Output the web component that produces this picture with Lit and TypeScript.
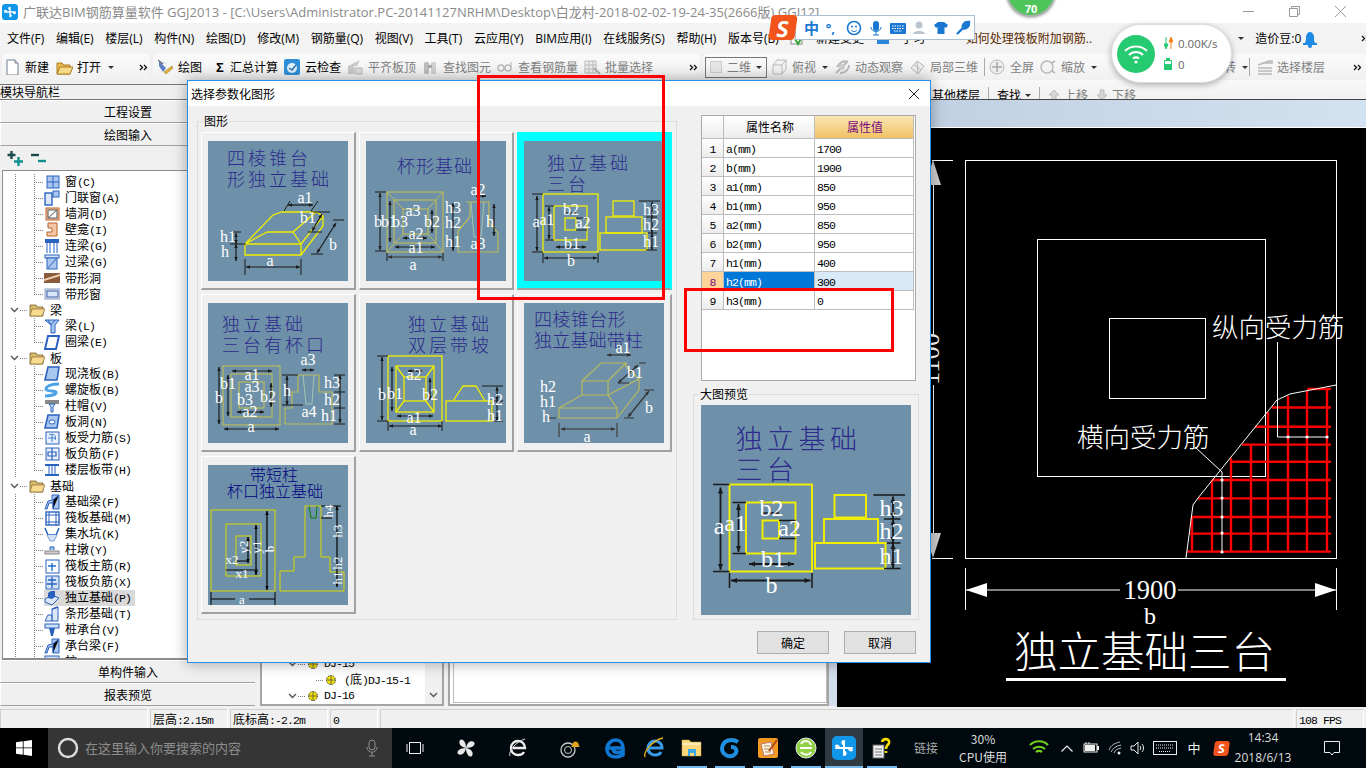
import { LitElement, html, svg, css } from 'lit';
import { customElement } from 'lit/decorators.js';

// wraps ascii runs so they get the fixed 6px latin of the old bitmap font
const mix = (s: string) =>
  s.split(/([\x20-\x7e]+)/).map((p, i) => (i % 2 ? html`<span class="a">${p}</span>` : p));

const sharedStyles = css`
  .a {
    font-family: 'Liberation Mono', monospace;
    font-size: 11.5px;
    letter-spacing: -0.9px;
  }
`;

/* ---------- diagram helpers ---------- */

const dim = (x1: number, y1: number, x2: number, y2: number, c = '#1a1a1a') => {
  const l = Math.hypot(x2 - x1, y2 - y1) || 1;
  const ux = (x2 - x1) / l;
  const uy = (y2 - y1) / l;
  const head = (x: number, y: number, d: number) =>
    `M${x} ${y}L${x + d * 4 * ux - 1.7 * uy} ${y + d * 4 * uy + 1.7 * ux}L${x + d * 4 * ux + 1.7 * uy} ${y + d * 4 * uy - 1.7 * ux}Z`;
  return svg`<path d="M${x1} ${y1}L${x2} ${y2}" stroke=${c} stroke-width="1.2" fill="none"/>
    <path d="${head(x1, y1, 1)}${head(x2, y2, -1)}" fill=${c}/>`;
};
const ln = (d: string, c = '#1a1a1a', w = 1) => svg`<path d=${d} stroke=${c} stroke-width=${w} fill="none"/>`;
const lbl = (x: number, y: number, t: string, size = 16) =>
  svg`<text x=${x} y=${y + 5} font-size=${size} text-anchor="middle" fill="#fff" font-family="'Liberation Serif',serif">${t}</text>`;
const vlbl = (x: number, y: number, t: string) =>
  svg`<text transform="translate(${x} ${y}) rotate(-90)" font-size="13" text-anchor="middle" fill="#fff" font-family="'Liberation Serif',serif">${t}</text>`;
const ttl = (x: number, y: number, t: string, size = 18, sp = 3, c = '#2c2a8c') =>
  svg`<text x=${x} y=${y} font-size=${size} letter-spacing=${sp} fill=${c} font-family="'Noto Sans CJK SC',sans-serif" font-weight="300">${t}</text>`;
const box = (x: number, y: number, w: number, h: number, c: string, sw = 1) =>
  svg`<rect x=${x} y=${y} width=${w} height=${h} fill="none" stroke=${c} stroke-width=${sw}/>`;

const Y = '#f2ee00';
const DY = '#b9b95c';

const diagrams = [
  // 四棱锥台形独立基础
  svg`${ttl(19, 24, '四棱锥台', 18, 3)}${ttl(19, 45, '形独立基础', 18, 3)}
    ${ln('M37 103H93V114H37ZM37 103L65 74L74 71H108L115 75L115 85L93 114M93 103L115 75M59 91H85L108 71M85 91L93 103M59 91L37 103', Y, 1.3)}
    ${dim(80, 64, 105, 64)}${ln('M76 70L82 60M103 70L110 60')}${dim(114, 73, 104, 90)}${ln('M103 71H122M100 91H114')}
    ${dim(128, 82, 109, 112)}${ln('M125 79H136M103 113H115')}${dim(28, 92, 28, 103)}${dim(28, 103, 28, 120)}${ln('M22 91H33M22 103H38')}
    ${dim(38, 126, 92, 126)}${ln('M37 118V134M93 118V134')}
    ${lbl(97, 57, 'a1')}${lbl(100, 77, 'b1')}${lbl(20, 96, 'h1')}${lbl(17, 111, 'h')}${lbl(62, 120, 'a')}${lbl(125, 104, 'b')}`,
  // 杯形基础
  svg`${ttl(31, 32, '杯形基础', 18, 1)}
    ${box(21, 51, 56, 60, DY, 1.2)}${box(28, 59, 42, 43, DY, 1.2)}${box(37, 68, 25, 25, DY, 1.2)}
    ${ln('M21 51L37 68M77 51L62 68M21 111L37 93M77 111L62 93', DY)}
    ${ln('M100 61H123V82L132 92V111H92V90L104 76V61', DY, 1.2)}${ln('M105 61L108 96M118 61L115 96M108 96H115', '#a6c4b4')}
    ${dim(14, 52, 14, 109, '#222')}${ln('M9 51H20M9 110H20')}${dim(24, 60, 24, 101)}${dim(22, 116, 76, 116, '#333')}${ln('M21 112V120M77 112V120')}
    ${dim(29, 106, 69, 106)}${dim(37, 97, 61, 97)}${dim(66, 69, 66, 92)}${dim(110, 55, 120, 55)}${dim(128, 63, 128, 95)}${dim(87, 62, 87, 110)}
    ${lbl(12, 81, 'b')}${lbl(23, 81, 'b1')}${lbl(34, 81, 'b3')}${lbl(47, 70, 'a3')}${lbl(66, 81, 'b2')}${lbl(50, 93, 'a2')}${lbl(50, 107, 'a1')}${lbl(47, 124, 'a')}
    ${lbl(112, 49, 'a2')}${lbl(87, 67, 'h3')}${lbl(87, 82, 'h2')}${lbl(87, 101, 'h1')}${lbl(124, 81, 'h')}${lbl(112, 103, 'a3')}`,
  // 独立基础三台
  svg`${ttl(23, 29, '独立基础', 18, 3)}${ttl(23, 50, '三台', 18, 3)}
    ${box(19, 53, 55, 58, Y, 1.3)}${box(30, 65, 33, 34, Y, 1.3)}${box(41, 77, 11, 12, Y, 1.3)}
    ${box(89, 60, 21, 15, Y, 1.3)}${box(82, 76, 36, 16, Y, 1.3)}${box(76, 92, 47, 17, Y, 1.3)}
    ${dim(13, 55, 13, 110)}${ln('M8 53H19M8 111H19')}${dim(25, 66, 25, 98)}${ln('M21 65H30M21 99H30')}
    ${dim(32, 106, 62, 106)}${dim(20, 117, 73, 117)}${ln('M19 112V122M74 112V122')}
    ${dim(128, 61, 128, 76)}${dim(128, 76, 128, 92)}${dim(128, 92, 128, 109)}${ln('M115 60H136M122 76H133M124 92H133M122 109H133')}
    ${ln('M41 72H52M52 77H63M52 89H63')}
    ${lbl(12, 81, 'a')}${lbl(23, 79, 'a1')}${lbl(47, 69, 'b2')}${lbl(59, 82, 'a2')}${lbl(48, 103, 'b1')}${lbl(47, 120, 'b')}
    ${lbl(127, 69, 'h3')}${lbl(127, 84, 'h2')}${lbl(127, 101, 'h1')}`,
  // 独立基础三台有杯口
  svg`${ttl(14, 28, '独立基础', 18, 3)}${ttl(14, 49, '三台有杯口', 18, 3)}
    ${box(15, 63, 57, 59, DY, 1.2)}${box(23, 71, 41, 43, DY, 1.2)}${box(31, 79, 25, 26, DY, 1.2)}
    ${ln('M90 72H111V89H124V121H77V105H84V89H90Z', DY, 1.2)}${ln('M95 72L98 101H104L106 72', '#a6c4b4')}
    ${dim(11, 64, 11, 121)}${dim(20, 72, 20, 113)}${dim(63, 80, 63, 104)}${dim(24, 68, 64, 68)}${dim(29, 109, 56, 109)}${dim(16, 126, 71, 126)}${dim(94, 67, 106, 67)}
    ${dim(79, 73, 79, 102)}${dim(132, 72, 132, 120)}${ln('M74 72H90M74 102H95M126 72H137M126 89H137M126 105H137M126 121H137')}
    ${lbl(100, 57, 'a3')}${lbl(44, 72, 'a1')}${lbl(20, 81, 'b1')}${lbl(44, 84, 'a3')}${lbl(11, 95, 'b')}${lbl(37, 97, 'b3')}${lbl(60, 94, 'b2')}
    ${lbl(79, 88, 'h')}${lbl(124, 80, 'h3')}${lbl(124, 97, 'h2')}${lbl(121, 113, 'h1')}${lbl(101, 109, 'a4')}${lbl(42, 109, 'a2')}${lbl(43, 124, 'a')}`,
  // 独立基础双层带坡
  svg`${ttl(42, 28, '独立基础', 18, 3)}${ttl(42, 49, '双层带坡', 18, 3)}
    ${box(22, 53, 54, 65, Y, 1.3)}${box(30, 63, 38, 46, Y, 1.3)}${box(38, 74, 22, 24, Y, 1.3)}
    ${ln('M30 63L38 74M68 63L60 74M30 109L38 98M68 109L60 98', Y, 1.3)}
    ${box(80, 98, 46, 20, Y, 1.3)}${ln('M87 98L97 83H110L119 98', Y, 1.3)}
    ${dim(16, 54, 16, 117)}${ln('M11 53H22M11 118H22')}${dim(26, 64, 26, 108)}${dim(31, 113, 67, 113)}${dim(23, 123, 76, 123)}${dim(42, 68, 56, 68)}${dim(64, 75, 64, 97)}
    ${dim(131, 84, 131, 98)}${dim(131, 98, 131, 118)}${ln('M116 83H137M128 98H137M128 118H137M22 118V128M76 118V128')}
    ${lbl(16, 92, 'b')}${lbl(29, 91, 'b1')}${lbl(48, 72, 'a2')}${lbl(64, 92, 'b2')}${lbl(48, 115, 'a1')}${lbl(47, 127, 'a')}${lbl(129, 97, 'h2')}${lbl(129, 113, 'h1')}`,
  // 四棱锥台形独立基础带柱
  svg`${ttl(10, 23, '四棱锥台形', 18, 0.4)}${ttl(10, 44, '独立基础带柱', 18, 0.2)}
    ${ln('M35 105H93V115H35ZM58 78H84V92H58ZM58 78L77 60H102L84 78M102 60V64M84 92L93 105M93 115L115 87V76L102 64M35 105L58 92M84 92L115 76', DY, 1.2)}
    ${dim(83, 52, 107, 52, '#333')}${dim(114, 62, 94, 80, '#333')}${dim(125, 88, 104, 114, '#333')}${dim(37, 126, 91, 126, '#333')}${ln('M35 120V134M93 120V134M115 60H122M94 80H105M120 87H130M100 115H110M24 115H32', '#333')}
    ${lbl(99, 45, 'a1')}${lbl(111, 70, 'b1')}${lbl(24, 84, 'h2')}${lbl(24, 99, 'h1')}${lbl(22, 114, 'h')}${lbl(63, 134, 'a')}${lbl(125, 105, 'b')}`,
  // 带短柱杯口独立基础
  svg`${ttl(42, 16, '带短柱', 16, 0, '#000080')}${ttl(19, 32, '杯口独立基础', 16, 0, '#000080')}
    ${box(3, 45, 64, 81, '#d8d800', 1)}${box(18, 59, 35, 52, '#d8d800', 1)}${box(28, 71, 15, 29, '#d8d800', 1)}
    ${ln('M97 41H113V92H122V107H136V126H72V106H86V92H97Z', '#d8d800')}${ln('M101 41L103 53H108L109 41', '#008000')}
    ${dim(59, 46, 59, 125, '#000')}${dim(48, 60, 48, 110, '#000')}${dim(40, 72, 40, 98, '#000')}${ln('M18 105H50M29 96H40', '#000')}
    ${ln('M3 134H27M41 134H67M3 127V140M67 127V140', '#000')}${dim(129, 41, 129, 122, '#000')}${ln('M113 41H133M113 53H124', '#000')}
    ${lbl(34, 134, 'a', 13)}${lbl(34, 108, 'x1', 13)}${lbl(24, 94, 'x2', 13)}${vlbl(40, 82, 'y2')}${vlbl(53, 82, 'y1')}${vlbl(66, 84, 'b')}
    ${vlbl(125, 46, 'h4')}${vlbl(134, 66, 'h3')}${vlbl(134, 98, 'h2')}${vlbl(134, 113, 'h1')}`,
];

const thumb = (i: number, size = 140) =>
  html`<svg width=${size} height=${size} viewBox="0 0 140 140" class="thumb">${diagrams[i]}</svg>`;

const params = [
  ['a(mm)', '1700'],
  ['b(mm)', '1900'],
  ['a1(mm)', '850'],
  ['b1(mm)', '950'],
  ['a2(mm)', '850'],
  ['b2(mm)', '950'],
  ['h1(mm)', '400'],
  ['h2(mm)', '300'],
  ['h3(mm)', '0'],
];

@customElement('param-dialog')
export class ParamDialog extends LitElement {
  static styles = [
    sharedStyles,
    css`
      :host {
        display: block;
        width: 744px;
        height: 583px;
        box-sizing: border-box;
        border: 1px solid #2a8fe6;
        background: #f0f0f0;
        box-shadow: 0 0 14px rgba(0, 0, 0, 0.35);
        font: 12px 'Noto Sans CJK SC', sans-serif;
        color: #000;
      }
      .title {
        height: 25px;
        background: #fff;
        display: flex;
        align-items: center;
        justify-content: space-between;
        padding: 0 10px 0 3px;
      }
      .body {
        display: flex;
        gap: 16px;
        padding: 9px 0 0 9px;
      }
      .group {
        position: relative;
        border: 1px solid #dcdcdc;
        box-sizing: border-box;
      }
      .group-name {
        position: absolute;
        left: 5px;
        top: -9px;
        line-height: 16px;
        background: #f0f0f0;
        padding: 0 1px;
      }
      .shapes {
        width: 480px;
        height: 499px;
        margin-top: 6px;
        padding: 10px 0 0 3px;
        display: grid;
        grid-template-columns: repeat(3, 155px);
        grid-auto-rows: 158px;
        column-gap: 3px;
        row-gap: 4px;
      }
      .card {
        box-sizing: border-box;
        padding: 8px 0 0 6px;
        border: 1px solid;
        border-color: #fff #a0a0a0 #a0a0a0 #fff;
        border-width: 1px 2px 2px 1px;
      }
      .card.on {
        background: #0ff;
        border-color: #0ff #0ff #a0a0a0 #0ff;
      }
      .thumb {
        display: block;
        background: #6e91a9;
      }
      .right {
        width: 226px;
      }
      .grid {
        width: 215px;
        height: 266px;
        margin-left: 8px;
        box-sizing: border-box;
        border: 1px solid #a9a9a9;
        background: #fff;
      }
      .rows {
        display: grid;
        grid-template-columns: 22px 91px 99px;
        grid-template-rows: 23px;
        grid-auto-rows: 19px;
      }
      .rows > div {
        box-sizing: border-box;
        border-right: 1px solid #bdbdbd;
        border-bottom: 1px solid #bdbdbd;
        line-height: 18px;
        padding-left: 2px;
        overflow: hidden;
      }
      .rows > .head {
        height: 23px;
        background: linear-gradient(#fff, #ececec);
        text-align: center;
        line-height: 22px;
      }
      .rows > .head.val {
        background: linear-gradient(#fbe6b4, #f0c264);
        color: #7a0a80;
      }
      .rows > .num {
        background: linear-gradient(#fff, #ececec);
        text-align: center;
        padding: 0;
      }
      .rows > .num.cur {
        background: #fdd397;
        color: #7a0a80;
      }
      .rows > .name.cur {
        background: #0078d7;
        color: #fff;
      }
      .rows > .val.cur {
        background: #d8e9f8;
      }
      .preview {
        width: 226px;
        height: 226px;
        margin-top: 13px;
        padding: 10px 0 0 7px;
      }
      .actions {
        display: flex;
        justify-content: flex-end;
        gap: 15px;
        padding: 11px 14px 0 0;
      }
      .btn {
        width: 72px;
        height: 23px;
        box-sizing: border-box;
        border: 1px solid #adadad;
        background: #e1e1e1;
        text-align: center;
        line-height: 21px;
      }
    `,
  ];

  render() {
    return html`
      <div class="title">
        <span>选择参数化图形</span>
        <svg width="12" height="12" viewBox="0 0 12 12"><path d="M1 1L11 11M11 1L1 11" stroke="#222" /></svg>
      </div>
      <div class="body">
        <div class="group shapes">
          <span class="group-name">图形</span>
          ${diagrams.map((_, i) => html`<div class="card ${i === 2 ? 'on' : ''}">${thumb(i)}</div>`)}
        </div>
        <div class="right">
          <div class="grid">
            <div class="rows">
              <div class="head"></div>
              <div class="head">属性名称</div>
              <div class="head val">属性值</div>
              ${params.map(
                ([n, v], i) => html`
                  <div class="num ${i === 7 ? 'cur' : ''}"><span class="a">${i + 1}</span></div>
                  <div class="name ${i === 7 ? 'cur' : ''}">${mix(n)}</div>
                  <div class="val ${i === 7 ? 'cur' : ''}">${mix(v)}</div>
                `,
              )}
            </div>
          </div>
          <div class="group preview">
            <span class="group-name">大图预览</span>
            ${thumb(2, 210)}
          </div>
        </div>
      </div>
      <div class="actions">
        <div class="btn">确定</div>
        <div class="btn">取消</div>
      </div>
    `;
  }
}

/* ---------- icons ---------- */

const ic = (w: number, h: number, body: unknown) =>
  html`<svg width=${w} height=${h} viewBox="0 0 ${w} ${h}" class="ic">${body}</svg>`;

const appLogo = (s: number) => html`<svg width=${s} height=${s} viewBox="0 0 24 24" class="ic">
  <rect width="24" height="24" rx="5" fill="#1296ea" />
  <path d="M12 5V19M4 12H20M12 5c-2 0-2 2-1 3M7 12c0-2-2-3-3-2M12 19c2 0 2-2 1-3M17 12c0 2 2 3 3 2" stroke="#fff" stroke-width="2" fill="none" stroke-linecap="round" />
</svg>`;

const g = '#b9b9b9';
const toolIcons: Record<string, unknown> = {
  doc: svg`<path d="M3 1H11L14 4V16H3Z" fill="#fff" stroke="#6f7f94"/><path d="M11 1V4H14" fill="#dfe6ef" stroke="#6f7f94"/>`,
  open: svg`<path d="M1 4H6L8 6H14V15H1Z" fill="#e8b64c" stroke="#a97c20"/><path d="M4 8H17L14 15H1Z" fill="#f7d989" stroke="#a97c20"/>`,
  brush: svg`<path d="M2 2L9 9L6 13L2 7Z" fill="#5d7fc4"/><path d="M4 2L10 6L7 3Z" fill="#a6b9dd"/><path d="M7 13L15 7L16 9L9 15Z" fill="#e6b23a" stroke="#8d6b17" stroke-width=".5"/><path d="M1 1L6 5" stroke="#333"/>`,
  cloud: svg`<rect width="16" height="16" rx="2" fill="#2f8fd8"/><circle cx="8" cy="9" r="5" fill="#dff0fb"/><path d="M5 9L8 11L12 6" stroke="#2470b0" stroke-width="1.5" fill="none"/>`,
  flat: svg`<path d="M1 15V7L13 1L10 7H7V15Z" fill="#c9c9c9"/><path d="M8 9H15V15H8Z" fill="#dcdcdc" stroke="${g}"/>`,
  find: svg`<rect x="2" y="3" width="5" height="12" rx="1.5" fill="#bdbdbd"/><rect x="9" y="3" width="5" height="12" rx="1.5" fill="#cfcfcf"/><rect x="6" y="6" width="4" height="3" fill="#a8a8a8"/>`,
  glass: svg`<circle cx="4" cy="9" r="3" fill="none" stroke="${g}" stroke-width="1.5"/><circle cx="11" cy="9" r="3" fill="none" stroke="${g}" stroke-width="1.5"/><path d="M14 9V3" stroke="${g}"/>`,
  batch: svg`<path d="M1 2H12V14H1ZM1 6H12M1 10H12M5 2V14M9 2V14" fill="#eee" stroke="${g}"/><path d="M10 9L16 15" stroke="#aaa" stroke-width="2"/>`,
  cube: svg`<path d="M2 6H11V15H2ZM2 6L6 1H15L11 6M15 1V10L11 15" fill="#f2f2f2" stroke="${g}"/>`,
  orbit: svg`<path d="M2 14L14 2M3 8c4-6 8-6 10-5M6 14c6 0 9-4 9-8" stroke="${g}" stroke-width="2" fill="none"/><circle cx="8" cy="8" r="3" fill="#ccc"/>`,
  local: svg`<path d="M2 9L8 2L15 7L9 15Z" fill="#eee" stroke="${g}"/><path d="M5 5.5L12 11M8 2L9 15" stroke="${g}"/>`,
  full: svg`<circle cx="8" cy="8" r="7" fill="#eee" stroke="${g}"/><path d="M8 3V13M3 8H13" stroke="#a8a8a8" stroke-width="1.5"/>`,
  zoom: svg`<circle cx="7" cy="8" r="6" fill="#f4f4f4" stroke="${g}" stroke-width="1.5"/><path d="M12 4L15 2M12 12L15 14" stroke="${g}" stroke-width="2"/>`,
  floor: svg`<path d="M2 6L13 2H16V4H6M2 9H16M2 12H16M2 15H16" stroke="${g}" stroke-width="1.6" fill="none"/>`,
};
const tool = (k: string) => ic(17, 16, toolIcons[k]);

const B = '#2b62c0';
const B2 = '#a9c6ef';
const treeIcons: Record<string, unknown> = {
  win: svg`<rect x="3" y="2" width="12" height="12" fill="${B2}" stroke="${B}"/><path d="M9 2V14M3 8H15" stroke="${B}"/>`,
  door: svg`<rect x="1" y="3" width="7" height="12" fill="#dbe7f8" stroke="${B}" stroke-width="1.4"/><rect x="9" y="1" width="6" height="6" fill="${B2}" stroke="${B}"/>`,
  hole: svg`<rect x="2" y="2" width="13" height="12" fill="#f2c7a8" stroke="#b8622b"/><rect x="4" y="4" width="9" height="8" fill="#fff" stroke="#555"/><path d="M4 12L13 4" stroke="#555"/>`,
  niche: svg`<path d="M4 1H13V14H3V10H8V6H4Z" fill="#f4c7a6" stroke="#b8622b"/>`,
  beam: svg`<rect x="1" y="1" width="14" height="4" fill="${B}"/><path d="M3 5V15M6 5V15M10 5V15M13 5V15" stroke="${B}"/>`,
  lintel: svg`<rect x="1" y="1" width="14" height="3" fill="#dbe7f8" stroke="${B}"/><rect x="3" y="4" width="10" height="11" fill="${B2}" stroke="${B}"/><path d="M4 14L12 5" stroke="${B}"/>`,
  strip: svg`<rect x="0" y="3" width="16" height="10" fill="#8a5a3a"/><path d="M0 10L16 5" stroke="#f0d0b0" stroke-width="2"/>`,
  stripw: svg`<rect x="1" y="3" width="15" height="10" fill="#f6d8c6" stroke="#7da0d8"/><rect x="3" y="5" width="11" height="6" fill="#dbe7f8" stroke="${B}"/>`,
  ibeam: svg`<path d="M1 2H15L11 7V15H7V7Z" fill="${B2}" stroke="${B}"/><path d="M7 7L11 2M4 2L7 7" stroke="${B}"/>`,
  ring: svg`<path d="M4 2H15L12 15H1Z" fill="#fff" stroke="${B}" stroke-width="2"/>`,
  slab: svg`<path d="M4 1H15L13 14H1Z" fill="${B2}" stroke="${B}" stroke-width="1.6"/>`,
  spiral: svg`<path d="M15 2C8 2 2 4 2 7C2 10 13 8 12 11C11 13 5 14 1 14" fill="none" stroke="#4aa3e8" stroke-width="3"/>`,
  cap: svg`<rect x="1" y="2" width="14" height="4" fill="#888"/><path d="M5 6H11L9 9V14H7V9Z" fill="#cfe0f7" stroke="${B}"/>`,
  shole: svg`<path d="M4 1H15L13 14H1Z" fill="${B2}" stroke="${B}" stroke-width="1.6"/><ellipse cx="8" cy="8" rx="3" ry="2" fill="#fff" stroke="${B}"/>`,
  bar: svg`<rect x="2" y="2" width="13" height="12" fill="#eaf1fb" stroke="${B}"/><path d="M8 4V12M4 8H12M5 5C9 3 13 5 11 10" fill="none" stroke="#3c7fc8"/>`,
  neg: svg`<rect x="2" y="2" width="13" height="12" fill="#eaf1fb" stroke="${B}"/><path d="M8 2V14M4 6H12V10H4Z" fill="none" stroke="${B}" stroke-width="1.2"/>`,
  band: svg`<path d="M1 3H15M1 13H15" stroke="${B}" stroke-width="2"/><path d="M5 3V13M8 3V13M11 3V13" stroke="${B}"/>`,
  footing: svg`<path d="M1 15L4 7L8 6L8 1L15 1V15H9V9H5L3 15Z" fill="${B2}" stroke="${B}"/><path d="M9 15V6L15 1" stroke="${B}"/>`,
  raft: svg`<rect x="2" y="2" width="13" height="13" fill="#fff" stroke="${B}" stroke-width="1.4"/><path d="M2 5H15M2 12H15M5 2V15M12 2V15" stroke="${B}"/>`,
  pit: svg`<path d="M1 2L4 9H12L15 2" fill="none" stroke="${B}" stroke-width="1.5"/><path d="M3 9L6 15H10L13 9" fill="#cfe0f7" stroke="#7da0d8"/>`,
  pier: svg`<path d="M6 8V5H10V8" fill="${B2}" stroke="${B}"/><rect x="1" y="9" width="14" height="3" fill="#ccc" stroke="#888"/>`,
  main: svg`<rect x="2" y="2" width="13" height="13" fill="#fff" stroke="${B}"/><path d="M8 5V13M4 8H12" stroke="#1d6fd0" stroke-width="1.4"/>`,
  mainn: svg`<rect x="2" y="2" width="13" height="13" fill="#d6e4f7" stroke="${B}"/><path d="M8 3V14M4 6H12M3 10H13" stroke="${B}" stroke-width="1.4"/>`,
  indep: svg`<path d="M1 9L8 5L15 8L8 15L1 12Z" fill="#dbe7f8" stroke="${B}"/><path d="M4 8V3L7 1H11V7L8 9Z" fill="${B}"/>`,
  stripf: svg`<path d="M1 15L4 9H8L8 3L14 1V15Z" fill="#dbe7f8" stroke="${B}"/><path d="M8 15V9M8 3L14 1" stroke="${B}" stroke-width="1.4"/>`,
  pile: svg`<rect x="1" y="2" width="14" height="4" fill="#cfe0f7" stroke="${B}"/><path d="M5 6H11L9 14H7Z" fill="${B}"/>`,
};

const folderIcon = ic(16, 14, svg`<path d="M1 2H7L8 4H14V13H1Z" fill="#d9b868" stroke="#8c7a4a"/><path d="M3 6H16L13 13H1Z" fill="#f6db91" stroke="#a5854a"/>`);

type Node = { t: string; i?: string; last?: boolean; sel?: boolean };
const tree: Node[] = [
  { t: '窗(C)', i: 'win' },
  { t: '门联窗(A)', i: 'door' },
  { t: '墙洞(D)', i: 'hole' },
  { t: '壁龛(I)', i: 'niche' },
  { t: '连梁(G)', i: 'beam' },
  { t: '过梁(G)', i: 'lintel' },
  { t: '带形洞', i: 'strip' },
  { t: '带形窗', i: 'stripw', last: true },
  { t: '梁' },
  { t: '梁(L)', i: 'ibeam' },
  { t: '圈梁(E)', i: 'ring', last: true },
  { t: '板' },
  { t: '现浇板(B)', i: 'slab' },
  { t: '螺旋板(B)', i: 'spiral' },
  { t: '柱帽(V)', i: 'cap' },
  { t: '板洞(N)', i: 'shole' },
  { t: '板受力筋(S)', i: 'bar' },
  { t: '板负筋(F)', i: 'neg' },
  { t: '楼层板带(H)', i: 'band', last: true },
  { t: '基础' },
  { t: '基础梁(F)', i: 'footing' },
  { t: '筏板基础(M)', i: 'raft' },
  { t: '集水坑(K)', i: 'pit' },
  { t: '柱墩(Y)', i: 'pier' },
  { t: '筏板主筋(R)', i: 'main' },
  { t: '筏板负筋(X)', i: 'mainn' },
  { t: '独立基础(P)', i: 'indep', sel: true },
  { t: '条形基础(T)', i: 'stripf' },
  { t: '桩承台(V)', i: 'pile' },
  { t: '承台梁(F)', i: 'footing' },
  { t: '桩(U)', i: 'pile' },
];

const chevron = html`<svg width="9" height="6" viewBox="0 0 9 6" class="ic"><path d="M1 1L4.5 4.5L8 1" fill="none" stroke="#555" stroke-width="1.4" /></svg>`;
const gearIcon = html`<svg width="12" height="12" viewBox="0 0 12 12" class="ic"><circle cx="6" cy="6" r="4.5" fill="#f0e000" stroke="#444" stroke-dasharray="1.5 1" /><path d="M6 1V11M1 6H11" stroke="#555" stroke-width=".8" /></svg>`;
const more = html`<svg width="9" height="7" viewBox="0 0 9 7" class="ic"><path d="M1 1L3.5 3.5L1 6M5 1L7.5 3.5L5 6" fill="none" stroke="#111" stroke-width="1.3" /></svg>`;
const drop = html`<span class="drop"></span>`;

/* ---------- cad drawing ---------- */

const redX = [1192, 1212, 1231, 1251, 1268, 1288, 1307, 1327];
const redXTop = [517, 480, 458, 444, 412, 396, 391, 388];
const redY = [389, 407.5, 426.7, 444.6, 461.8, 480, 498.4, 517, 533.6, 551.6];
const redYLeft = [1307, 1272, 1255, 1242, 1231, 1212, 1198, 1192, 1190, 1187];
const cjk = "'Noto Sans CJK SC',sans-serif";
const ser = "'Liberation Serif',serif";

const cadDrawing = html`<svg width="529" height="579" viewBox="837 128 529 579" class="cad-svg">
  <g fill="none" stroke="#fff" stroke-width="1">
    <rect x="965.5" y="160.5" width="371" height="398" />
    <rect x="1037.5" y="239.5" width="228" height="237" />
    <rect x="1109.5" y="318.5" width="96" height="80" />
  </g>
  <g stroke="#f00" stroke-width="2.4">
    ${redX.map((x, i) => svg`<path d="M${x} ${redXTop[i]}V552"/>`)}
    ${redY.map((y, i) => svg`<path d="M${redYLeft[i]} ${y}H1331"/>`)}
  </g>
  <path d="M1186 558L1193 505L1198 498L1277 400L1290 394L1336 385" fill="none" stroke="#fff" />
  <path d="M1277.5 342V437H1327M1195 447L1222 472V552" fill="none" stroke="#fff" />
  <g fill="#fff">
    ${[1288, 1307, 1327].map((x) => svg`<circle cx=${x} cy="437" r="1.6"/>`)}
    ${[480, 498, 517, 533, 552].map((y) => svg`<circle cx="1222" cy=${y} r="1.6"/>`)}
    <path d="M966 590L987 583V597ZM1336 590L1315 583V597Z" />
    <path d="M933 160L925 185H941ZM933 558L925 533H941Z" fill="#cfcfcf" />
  </g>
  <path d="M965.5 568V610M1336.5 568V610M966 590H1120M1178 590H1336M932 160.5H953M932 558.5H953M933.5 185V335M933.5 385V533" stroke="#fff" fill="none" />
  <text x="1212" y="337" font-size="26.5" fill="#fff" font-family=${cjk} font-weight="300">纵向受力筋</text>
  <text x="1077" y="447" font-size="26.5" fill="#fff" font-family=${cjk} font-weight="300">横向受力筋</text>
  <text x="1150" y="599" font-size="26.5" fill="#fff" text-anchor="middle" font-family=${ser}>1900</text>
  <text x="1150" y="624" font-size="24" fill="#fff" text-anchor="middle" font-family=${ser}>b</text>
  <text transform="translate(939 359) rotate(-90)" font-size="26.5" fill="#fff" text-anchor="middle" font-family=${ser}>1100</text>
  <text x="1014" y="668" font-size="43.5" fill="#fff" font-family=${cjk} font-weight="300">独立基础三台</text>
  <rect x="1006" y="678" width="280" height="3" fill="#fff" />
</svg>`;

/* ---------- taskbar icons ---------- */

const tb: Record<string, unknown> = {
  fan: svg`<g fill="#e8e8e8"><path d="M11 11C6 10 3 7 5 3C8 1 11 5 11 11Z"/><path d="M11 11C12 6 15 3 19 5C21 8 17 11 11 11Z"/><path d="M11 11C16 12 19 15 17 19C14 21 11 17 11 11Z"/><path d="M11 11C10 16 7 19 3 17C1 14 5 11 11 11Z"/></g>`,
  ie: svg`<path d="M6 11H18C18 6 14 4 11 4C7 4 4 7 4 11C4 16 8 18 11 18C14 18 16 17 17 15" fill="none" stroke="#eee" stroke-width="2.4"/><path d="M3 19C1 15 8 5 18 2" fill="none" stroke="#ddd"/>`,
  swirl: svg`<circle cx="9" cy="13" r="7" fill="none" stroke="#ccc" stroke-width="1.3"/><circle cx="9" cy="13" r="3.5" fill="none" stroke="#ccc"/><path d="M13 9C13 3 20 3 20 9L21 10H12Z" fill="#e0a020"/>`,
  edge: svg`<path d="M4 11H18C18 6 15 3 11 3C6 3 2 7 2 12C2 18 7 20 11 20C14 20 16 19 18 18V14C15 16 8 17 8 11" fill="none" stroke="#0f78d4" stroke-width="3.6"/>`,
  ieb: svg`<path d="M6 11H19C19 6 15 4 12 4C8 4 5 7 5 11C5 16 9 18 12 18C15 18 17 17 18 15" fill="none" stroke="#3a9ae8" stroke-width="3"/><path d="M2 20C0 15 10 3 20 1" fill="none" stroke="#e0b020" stroke-width="1.4"/>`,
  files: svg`<path d="M1 3H8L10 5H20V19H1Z" fill="#fbd77a" stroke="#c9a84c" stroke-width=".5"/><path d="M1 7H20" stroke="#fff"/><rect x="7" y="12" width="8" height="7" fill="#3fa8e6"/><rect x="9" y="16" width="4" height="3" fill="#fbd77a"/>`,
  g: svg`<path d="M19 5C13 1 4 3 3 11C3 18 10 21 15 18C19 15 18 10 12 10" fill="none" stroke="#1f8fe0" stroke-width="4"/>`,
  notes: svg`<rect x="1" y="1" width="20" height="20" rx="2" fill="#f09a20"/><path d="M4 7L14 5L17 17L7 19Z" fill="#fff4da" stroke="#b77"/><path d="M7 9H13M7 12H14M8 15H14" stroke="#a86" /><path d="M12 14L20 3" stroke="#b04818" stroke-width="2"/>`,
  ge: svg`<circle cx="11" cy="11" r="10" fill="#8fd143" stroke="#eee"/><path d="M5 11H17M6 7C9 2 15 4 16 8M6 15C9 19 15 18 16 15" fill="none" stroke="#fff" stroke-width="2"/>`,
  help: svg`<rect x="2" y="8" width="11" height="13" fill="#eee" stroke="#666"/><path d="M4 12H11M4 15H11M4 18H11" stroke="#777"/><path d="M11 5C12 1 19 1 18 6C17 9 15 8 15 12M15 14V16" fill="none" stroke="#f8e000" stroke-width="2.6"/>`,
};
const tbIcon = (k: string) => ic(22, 22, tb[k]);

@customElement('app-root')
export class AppRoot extends LitElement {
  static styles = [
    sharedStyles,
    css`
      :host {
        display: block;
        position: relative;
        width: 1366px;
        height: 768px;
        overflow: hidden;
        background: #f0f0f0;
        font: 12px/16px 'Noto Sans CJK SC', sans-serif;
        color: #000;
      }
      .ic {
        display: block;
        flex: none;
      }
      .app {
        display: flex;
        flex-direction: column;
        height: 728px;
      }

      /* title bar */
      .titlebar {
        height: 23px;
        flex: none;
        background: #fff;
        display: flex;
        align-items: center;
        padding-left: 2px;
        gap: 5px;
        color: #8a8a8a;
        font: 13px 'Open Sans', 'Noto Sans CJK SC', sans-serif;
        white-space: nowrap;
      }
      .winbtns {
        margin-left: auto;
        display: flex;
        gap: 35px;
        padding-right: 20px;
      }

      /* menu */
      .menu {
        height: 31px;
        flex: none;
        display: flex;
        align-items: center;
        padding-left: 7px;
        gap: 11.6px;
        white-space: nowrap;
        font-family: 'Open Sans', 'Noto Sans CJK SC', sans-serif;
        background: #f3f3f3;
      }
      .menu .news {
        color: #5c2a00;
        margin-left: 29px;
      }
      .menu .m-r {
        margin-left: 134px;
      }
      .menu .bell {
        margin-left: -11px;
      }
      .menu .more {
        margin-left: 31px;
      }
      .drop {
        display: block;
        flex: none;
        width: 0;
        height: 0;
        border: 3px solid transparent;
        border-top: 3px solid #333;
        border-bottom: 0;
      }

      /* toolbars */
      .tools {
        height: 26px;
        flex: none;
        display: flex;
        gap: 3px;
        padding-left: 2px;
        white-space: nowrap;
      }
      .band {
        display: flex;
        align-items: center;
        gap: 6px;
        background: linear-gradient(#fafafa, #f1f1f1);
        border-radius: 3px 3px 0 0;
      }
      .b1 {
        width: 148px;
        flex: none;
        padding-left: 2px;
        gap: 7px;
        box-sizing: border-box;
      }
      .b2 {
        width: 547px;
        flex: none;
        padding-left: 4px;
        box-sizing: border-box;
      }
      .b3 {
        flex: 1;
        min-width: 0;
        padding-left: 2px;
      }
      .sigma {
        margin-left: 8px;
      }
      .sigma b {
        width: 10px;
        font: bold 13px 'Liberation Sans', sans-serif;
      }
      .b3 .combo {
        margin-right: -2px;
      }
      .b3 .rot {
        margin-left: 121px;
      }
      .b3 .sep.wide {
        margin-right: -2px;
      }
      .b3 .sep.tight {
        margin-left: -5px;
      }
      .it {
        display: flex;
        align-items: center;
        gap: 4px;
      }
      .it.off {
        color: #808080;
      }
      .push {
        margin-left: auto;
        margin-right: 2px;
      }
      .b3 .push {
        margin-right: 4px;
      }
      .combo {
        width: 62px;
        height: 21px;
        box-sizing: border-box;
        border: 1px solid #777;
        display: flex;
        align-items: center;
        gap: 5px;
        padding: 0 4px;
        color: #808080;
      }
      .combo i {
        display: block;
        width: 13px;
        height: 10px;
        background: #e6e6e6;
        border: 1px solid #ccc;
      }
      .sep {
        width: 1px;
        height: 18px;
        background: #aaa;
      }

      /* work area */
      .work {
        flex: 1;
        display: flex;
        min-height: 0;
      }
      .nav {
        width: 255px;
        flex: none;
        padding: 4px 0 2px;
        box-sizing: border-box;
        display: flex;
        flex-direction: column;
      }
      .nav-head {
        height: 14px;
        line-height: 14px;
        border-top: 1px solid #777;
        border-bottom: 1px solid #777;
        flex: none;
      }
      .nav-btn {
        height: 23px;
        box-sizing: border-box;
        flex: none;
        text-align: center;
        line-height: 21px;
        border-top: 1px solid #fff;
        border-bottom: 1px solid #a0a0a0;
        border-left: 1px solid #fff;
        background: #f0f0f0;
      }
      .tree-tools {
        height: 24px;
        flex: none;
        display: flex;
        align-items: center;
        gap: 6px;
        padding-left: 7px;
      }
      .tree {
        flex: 1;
        min-height: 0;
        overflow: hidden;
        margin-left: 2px;
        border: 1px solid #8c8c8c;
        border-width: 1px 1px 2px 1px;
        background: #fff;
        padding-top: 3px;
      }
      .row {
        height: 16px;
        display: flex;
        align-items: center;
        white-space: nowrap;
      }
      .g1 {
        width: 1px;
        height: 16px;
        margin-left: 12px;
        background: repeating-linear-gradient(#808080 0 1px, transparent 1px 2px);
      }
      .branch {
        width: 10px;
        height: 16px;
        margin-left: 18px;
        background:
          repeating-linear-gradient(#808080 0 1px, transparent 1px 2px) left top / 1px 100% no-repeat,
          repeating-linear-gradient(to right, #808080 0 1px, transparent 1px 2px) left 8px / 100% 1px no-repeat;
      }
      .branch.last {
        background-size:
          1px 50%,
          100% 1px;
      }
      .node {
        display: flex;
        align-items: center;
        gap: 5px;
        height: 16px;
        padding-right: 4px;
      }
      .node.sel {
        background: #d9d9d9;
      }
      .chev {
        margin-left: 7px;
      }
      .hdash {
        width: 8px;
        height: 1px;
        margin: 0 1px;
        flex: none;
        background: repeating-linear-gradient(to right, #808080 0 1px, transparent 1px 2px);
      }

      .right {
        flex: 1;
        min-width: 0;
        display: flex;
        flex-direction: column;
      }
      .tools2 {
        height: 20px;
        flex: none;
        display: flex;
        align-items: flex-start;
        gap: 8px;
        padding: 7px 0 0 677px;
        box-sizing: border-box;
        overflow: hidden;
        white-space: nowrap;
        border-bottom: 1px solid #444;
        background: linear-gradient(#f8f8f8, #f1f1f1);
      }
      .panes {
        flex: 1;
        min-height: 0;
        display: flex;
      }
      .pane {
        box-sizing: border-box;
        height: 606px;
        background: #fff;
        border: 2px solid #a5a5a5;
        border-top: 0;
        font-size: 12px;
      }
      .pane-tree {
        width: 184px;
        margin-left: 5px;
        display: flex;
        flex-direction: column;
        justify-content: flex-end;
        position: relative;
      }
      .scroll {
        position: absolute;
        right: 0;
        top: 0;
        bottom: 0;
        width: 17px;
        background: #f0f0f0;
        display: flex;
        align-items: flex-end;
        justify-content: center;
        padding-bottom: 6px;
        box-sizing: border-box;
      }
      .dj {
        display: flex;
        align-items: center;
        height: 16px;
        padding-left: 26px;
      }
      .dj.sub {
        padding-left: 53px;
      }
      .dj .txt {
        margin-left: 5px;
      }
      .dj.sub .txt {
        margin-left: 7px;
      }
      .pane-props {
        width: 381px;
        margin-left: 4px;
        padding: 0 0 3px 3px;
      }
      .pane-props div {
        height: 100%;
        border: 1px solid #bbb;
      }
      .splitter {
        width: 8px;
        height: 606px;
        background: #d3deec;
      }
      .cad {
        flex: 1;
        min-width: 0;
        height: 607px;
        background: #000;
      }
      .cad-top {
        height: 27px;
        background: linear-gradient(to right, #bccde0, #d3e2f0);
        border-bottom: 1px solid #fff;
      }
      .cad-svg {
        display: block;
      }

      /* status */
      .status {
        height: 20px;
        flex: none;
        display: flex;
        gap: 2px;
        padding-top: 1px;
        box-sizing: border-box;
        white-space: nowrap;
      }
      .status > div {
        box-sizing: border-box;
        border-top: 1px solid #d0d0d0;
        border-left: 1px solid #d0d0d0;
        border-right: 1px solid #fff;
        padding-left: 2px;
        line-height: 18px;
      }

      /* taskbar */
      .taskbar {
        height: 40px;
        display: flex;
        align-items: center;
        background: #00090d;
        color: #ddd;
        white-space: nowrap;
      }
      .start {
        width: 48px;
        height: 40px;
        background: #000;
        display: flex;
        align-items: center;
        justify-content: center;
        flex: none;
      }
      .search {
        width: 344px;
        height: 40px;
        flex: none;
        box-sizing: border-box;
        background: #353535;
        display: flex;
        align-items: center;
        padding: 0 14px 0 9px;
        color: #8d8d8d;
        font-size: 13px;
        gap: 6px;
      }
      .search .mic {
        margin-left: auto;
      }
      .task {
        width: 46px;
        height: 40px;
        display: flex;
        align-items: center;
        justify-content: center;
        flex: none;
      }
      .tbi {
        width: 38px;
        height: 40px;
        flex: none;
        display: flex;
        align-items: center;
        justify-content: center;
        position: relative;
      }
      .tbi.m9 {
        margin-left: 9px;
      }
      .tbi.m14 {
        margin-left: 14px;
      }
      .tbi.m8 {
        margin-left: 8px;
      }
      .tbi.cur {
        background: #2f3b40;
      }
      .tbi.run::after {
        content: '';
        position: absolute;
        left: 4px;
        right: 4px;
        bottom: 0;
        height: 2px;
        background: #76b9ed;
      }
      .tbi.cur.run::after {
        left: 0;
        right: 0;
      }
      .tr {
        height: 40px;
        flex: none;
        display: flex;
        align-items: center;
        justify-content: center;
        text-align: center;
      }
      .w22 {
        width: 22px;
      }
      .w24 {
        width: 24px;
      }
      .w26 {
        width: 26px;
      }
      .w28 {
        width: 28px;
      }
      .w32 {
        width: 32px;
      }
      .link {
        width: 50px;
        color: #aaa;
        font-size: 12px;
      }
      .cpu {
        width: 64px;
        line-height: 18px;
        color: #ddd;
      }
      .wifi-g {
        width: 32px;
        margin-left: 8px;
      }
      .zh-tray {
        font-size: 13px;
        color: #eee;
      }
      .s-tray {
        width: 15px;
        height: 15px;
        background: #f2541c;
        border-radius: 3px;
        color: #fff;
        font: bold 12px/15px 'Open Sans', sans-serif;
        text-align: center;
        transform: skewX(-8deg);
      }
      .clock {
        width: 56px;
        line-height: 20px;
        color: #ddd;
        font-family: 'Open Sans', sans-serif;
        font-size: 12px;
      }
      .notif {
        width: 52px;
        margin-left: 15px;
      }

      /* floating things */
      .float-dlg {
        position: absolute;
        left: 187px;
        top: 80px;
      }
      .red {
        position: absolute;
        box-sizing: border-box;
        border: 3px solid #f00;
      }
      .red.r1 {
        left: 477px;
        top: 75px;
        width: 188px;
        height: 225px;
      }
      .red.r2 {
        left: 684px;
        top: 288px;
        width: 210px;
        height: 64px;
      }
      .badge {
        position: absolute;
        left: 1006px;
        top: -33px;
        width: 50px;
        height: 50px;
        box-sizing: border-box;
        border-radius: 50%;
        background: #4fc45a;
        border: 2px solid #a9b3ad;
        box-shadow: 0 1px 3px rgba(0, 0, 0, 0.3);
        color: #fff;
        font: bold 11px 'Open Sans', sans-serif;
        text-align: center;
        padding-top: 32px;
      }
      .ime {
        position: absolute;
        left: 770px;
        top: 15px;
        display: flex;
        align-items: center;
      }
      .ime-s {
        width: 26px;
        height: 25px;
        position: relative;
        z-index: 1;
        display: flex;
        align-items: center;
        justify-content: center;
        background: #f2541c;
        border-radius: 4px;
        color: #fff;
        font: bold 22px 'Open Sans', sans-serif;
        transform: skewX(-8deg);
      }
      .ime-bar {
        width: 180px;
        height: 25px;
        margin-left: -1px;
        box-sizing: border-box;
        background: #fff;
        border: 1px solid #a9bfd6;
        display: flex;
        align-items: center;
        gap: 5.7px;
        padding-left: 8px;
        color: #1a78d2;
      }
      .ime-bar .zh {
        font: bold 15px 'Noto Sans CJK SC', sans-serif;
        width: 16px;
      }
      .ime-bar .pu {
        font: bold 13px 'Open Sans', sans-serif;
        width: 15px;
      }
      .net {
        position: absolute;
        left: 1111px;
        top: 24px;
        width: 121px;
        height: 59px;
        box-sizing: border-box;
        background: #fff;
        border: 1px solid #ddd;
        border-radius: 30px;
        box-shadow: 0 2px 6px rgba(0, 0, 0, 0.3);
        display: flex;
        align-items: center;
        gap: 9px;
        padding-left: 5px;
        font: 11.5px 'Open Sans', sans-serif;
        color: #666;
      }
      .net-c {
        width: 38px;
        height: 38px;
        border-radius: 50%;
        background: #26ca70;
        display: flex;
        align-items: center;
        justify-content: center;
        flex: none;
      }
      .net-rows {
        display: flex;
        flex-direction: column;
        gap: 6px;
      }
      .net-rows div {
        display: flex;
        align-items: center;
        gap: 5px;
      }
    `,
  ];

  private renderTreeRow(n: Node) {
    if (!n.i) {
      return html`<div class="row">
        <span class="chev">${chevron}</span>
        <span class="hdash"></span>
        <span class="node">${folderIcon}<span>${n.t}</span></span>
      </div>`;
    }
    return html`<div class="row">
      <span class="g1"></span>
      <span class="branch ${n.last ? 'last' : ''}"></span>
      <span class="node ${n.sel ? 'sel' : ''}">${ic(16, 16, treeIcons[n.i])}<span>${mix(n.t)}</span></span>
    </div>`;
  }

  private item(k: string, t: string, off = false) {
    return html`<span class="it ${off ? 'off' : ''}">${tool(k)}${t}</span>`;
  }

  render() {
    const menu = ['文件(F)', '编辑(E)', '楼层(L)', '构件(N)', '绘图(D)', '修改(M)', '钢筋量(Q)', '视图(V)', '工具(T)', '云应用(Y)', 'BIM应用(I)', '在线服务(S)', '帮助(H)', '版本号(B)'];
    const upArrow = ic(12, 12, svg`<path d="M6 1L11 6H8V11H4V6H1Z" fill="#d6d6d6" stroke="#bbb"/>`);
    const downArrow = ic(12, 12, svg`<path d="M6 11L11 6H8V1H4V6H1Z" fill="#d6d6d6" stroke="#bbb"/>`);
    return html`
      <div class="app">
        <div class="titlebar">
          ${appLogo(16)}
          <span>广联达BIM钢筋算量软件 GGJ2013 - [C:\\Users\\Administrator.PC-20141127NRHM\\Desktop\\白龙村-2018-02-02-19-24-35(2666版).GGJ12]</span>
          <div class="winbtns">
            <svg width="11" height="11" viewBox="0 0 11 11"><path d="M0 5.5H11" stroke="#999" /></svg>
            <svg width="11" height="11" viewBox="0 0 11 11"><path d="M0.5 2.5H8.5V10.5H0.5ZM2.5 2.5V0.5H10.5V8.5H8.5" fill="none" stroke="#999" /></svg>
            <svg width="11" height="11" viewBox="0 0 11 11"><path d="M0 0L11 11M11 0L0 11" stroke="#999" /></svg>
          </div>
        </div>

        <div class="menu">
          ${menu.map((m) => html`<span>${m}</span>`)}
          ${ic(14, 14, svg`<rect x="1" y="2" width="11" height="10" fill="#fff" stroke="#888"/><path d="M5 7L8 12L12 5" stroke="#3aa53a" stroke-width="2" fill="none"/>`)}
          <span>新建变更</span>
          ${ic(14, 14, svg`<rect x="1" y="3" width="12" height="9" fill="#2a86d8"/>`)}
          <span>学习</span>
          <span class="news">如何处理筏板附加钢筋..</span>
          <span class="m-r">${drop}</span>
          <span>造价豆:0</span>
          <span class="bell">${ic(16, 18, svg`<path d="M3 13C4 11 4 9 4 7C4 4 6 2 8 2C10 2 12 4 12 7C12 9 12 11 13 13ZM1 13H15V15H1Z" fill="#1d8ae5"/><circle cx="8" cy="16" r="2" fill="#1d8ae5"/>`)}</span>
          <span class="more">${more}</span>
        </div>

        <div class="tools">
          <div class="band b1">
            ${this.item('doc', '新建')}
            ${this.item('open', '打开')}
            ${drop}
            <span class="push">${more}</span>
          </div>
          <div class="band b2">
            ${this.item('brush', '绘图')}
            <span class="it sigma"><b>Σ</b>汇总计算</span>
            ${this.item('cloud', '云检查')}
            ${this.item('flat', '平齐板顶', true)}
            ${this.item('find', '查找图元', true)}
            ${this.item('glass', '查看钢筋量', true)}
            ${this.item('batch', '批量选择', true)}
            <span class="push">${more}</span>
          </div>
          <div class="band b3">
            <span class="combo"><i></i>二维${drop}</span>
            ${this.item('cube', '俯视', true)}
            ${drop}
            ${this.item('orbit', '动态观察', true)}
            ${this.item('local', '局部三维', true)}
            <span class="sep wide"></span>
            ${this.item('full', '全屏', true)}
            ${this.item('zoom', '缩放', true)}
            ${drop}
            <span class="it off rot">转</span>
            ${drop}
            <span class="sep tight"></span>
            ${this.item('floor', '选择楼层', true)}
            <span class="push">${more}</span>
          </div>
        </div>

        <div class="work">
          <div class="nav">
            <div class="nav-head">模块导航栏</div>
            <div class="nav-btn">工程设置</div>
            <div class="nav-btn">绘图输入</div>
            <div class="tree-tools">
              ${ic(17, 15, svg`<path d="M4.5 0V8M0.5 4H8.5" stroke="#1a4a4a" stroke-width="2.4"/><path d="M11.5 6V15M7 10.5H16" stroke="#0f8f8f" stroke-width="2.4"/>`)}
              ${ic(17, 15, svg`<path d="M1 4H9" stroke="#1a4a4a" stroke-width="2.4"/><path d="M8 10H16" stroke="#0f8f8f" stroke-width="2.4"/>`)}
            </div>
            <div class="tree">${tree.map((n) => this.renderTreeRow(n))}</div>
            <div class="nav-btn">单构件输入</div>
            <div class="nav-btn">报表预览</div>
          </div>

          <div class="right">
            <div class="tools2">
              <span>其他楼层</span>
              <span class="sep"></span>
              <span class="it">查找${drop}</span>
              <span class="sep"></span>
              <span class="it off">${upArrow}上移</span>
              <span class="it off">${downArrow}下移</span>
            </div>
            <div class="panes">
              <div class="pane pane-tree">
                <div class="dj">${chevron}<span class="hdash"></span>${gearIcon}<span class="a txt">DJ-15</span></div>
                <div class="dj sub"><span class="hdash"></span>${gearIcon}<span class="txt">${mix('(底)DJ-15-1')}</span></div>
                <div class="dj">${chevron}<span class="hdash"></span>${gearIcon}<span class="a txt">DJ-16</span></div>
                <div class="scroll">${chevron}</div>
              </div>
              <div class="pane pane-props"><div></div></div>
              <div class="splitter"></div>
              <div class="cad">
                <div class="cad-top"></div>
                ${cadDrawing}
              </div>
            </div>
          </div>
        </div>

        <div class="status">
          <div style="width:148px"></div>
          <div style="width:78px">${mix('层高:2.15m')}</div>
          <div style="width:98px">${mix('底标高:-2.2m')}</div>
          <div style="width:48px">${mix('0')}</div>
          <div style="width:914px"></div>
          <div style="width:68px">${mix('108 FPS')}</div>
        </div>
      </div>

      <div class="taskbar">
        <div class="start">
          <svg width="16" height="16" viewBox="0 0 16 16" fill="#fff"><path d="M0 2.2L6.8 1.3V7.5H0ZM7.6 1.2L16 0V7.5H7.6ZM0 8.3H6.8V14.7L0 13.8ZM7.6 8.3H16V16L7.6 14.8Z" /></svg>
        </div>
        <div class="search">
          <svg width="22" height="22" viewBox="0 0 22 22"><circle cx="11" cy="11" r="9" fill="none" stroke="#ddd" stroke-width="2.4" /></svg>
          <span>在这里输入你要搜索的内容</span>
          <svg class="mic" width="12" height="18" viewBox="0 0 12 18" fill="none" stroke="#8d8d8d"><rect x="3" y="1" width="6" height="10" rx="3" /><path d="M1 8C1 15 11 15 11 8M6 13V17M3 17H9" /></svg>
        </div>
        <div class="task">
          <svg width="18" height="14" viewBox="0 0 18 14" fill="none" stroke="#eee"><rect x="3.5" y="1.5" width="11" height="11" /><path d="M1 3V11M17 3V11" /></svg>
        </div>
        <div class="tbi m9">${tbIcon('fan')}</div>
        <div class="tbi m14">${tbIcon('ie')}</div>
        <div class="tbi m14">${tbIcon('swirl')}</div>
        <div class="tbi m8">${tbIcon('edge')}</div>
        <div class="tbi">${tbIcon('ieb')}</div>
        <div class="tbi run">${tbIcon('files')}</div>
        <div class="tbi run">${tbIcon('g')}</div>
        <div class="tbi run">${tbIcon('notes')}</div>
        <div class="tbi run">${tbIcon('ge')}</div>
        <div class="tbi cur run">${appLogo(24)}</div>
        <div class="tbi run">${tbIcon('help')}</div>

        <div class="tr link">链接</div>
        <div class="tr cpu">30%<br />CPU使用</div>
        <div class="tr wifi-g">
          <svg width="20" height="16" viewBox="0 0 20 16" fill="none" stroke="#6fce1e" stroke-width="2.2"><path d="M1 5C6 0 14 0 19 5M4 9C7 6 13 6 16 9M7 12C9 10.5 11 10.5 13 12" /></svg>
        </div>
        <div class="tr w24"><svg width="12" height="7" viewBox="0 0 12 7" fill="none" stroke="#eee" stroke-width="1.2"><path d="M0.5 6.5L6 1L11.5 6.5" /></svg></div>
        <div class="tr w24"><svg width="16" height="12" viewBox="0 0 16 12"><path d="M3 2V0M6 2V0" stroke="#eee" /><rect x="1" y="2" width="13" height="8" fill="none" stroke="#eee" /><rect x="2" y="3" width="10" height="6" fill="#eee" /><rect x="14" y="4" width="2" height="4" fill="#eee" /></svg></div>
        <div class="tr w24"><svg width="14" height="14" viewBox="0 0 14 14" fill="none" stroke="#bbb"><path d="M1 9C3 4 7 2 12 1M3 11C5 7 8 5 13 4M6 12C7 9 9 8 13 7" /><circle cx="11" cy="12" r="1.5" fill="#eee" stroke="none" /></svg></div>
        <div class="tr w22"><svg width="16" height="14" viewBox="0 0 16 14" fill="none" stroke="#eee"><path d="M1 5H4L8 1V13L4 9H1ZM10 5C11 6 11 8 10 9M12 3C14 5 14 9 12 11" /></svg></div>
        <div class="tr w32"><svg width="24" height="14" viewBox="0 0 24 14" fill="none" stroke="#eee"><rect x="0.5" y="0.5" width="23" height="13" /><path d="M3 4H21M3 7H21M6 10.5H18" stroke-dasharray="1 1" /></svg></div>
        <div class="tr w26 zh-tray">中</div>
        <div class="tr w28"><span class="s-tray">S</span></div>
        <div class="tr clock"><span>14:34<br />2018/6/13</span></div>
        <div class="tr notif">
          <svg width="16" height="15" viewBox="0 0 16 15" fill="none" stroke="#eee"><path d="M0.5 0.5H15.5V11.5H10L8 14L6 11.5H0.5Z" /></svg>
        </div>
      </div>

      <param-dialog class="float-dlg"></param-dialog>

      <div class="red r1"></div>
      <div class="red r2"></div>

      <div class="badge">70</div>

      <div class="ime">
        <div class="ime-s">S</div>
        <div class="ime-bar">
          <span class="zh">中</span>
          <span class="pu">°,</span>
          ${ic(16, 16, svg`<circle cx="8" cy="8" r="6.5" fill="none" stroke="#1a78d2" stroke-width="1.6"/><circle cx="6" cy="6.5" r="1" fill="#1a78d2"/><circle cx="10" cy="6.5" r="1" fill="#1a78d2"/><path d="M5 10C6 12 10 12 11 10" stroke="#1a78d2" fill="none"/>`)}
          ${ic(16, 16, svg`<rect x="5" y="1" width="6" height="10" rx="3" fill="#1a78d2"/><path d="M3 7C3 13 13 13 13 7M8 12V15M5 15H11" stroke="#1a78d2" fill="none"/>`)}
          ${ic(16, 16, svg`<rect x="0" y="3" width="16" height="11" rx="1" fill="#1a78d2"/><path d="M2 6H14M2 8.5H14M4 11H12" stroke="#fff" stroke-dasharray="1.5 1"/>`)}
          ${ic(16, 16, svg`<circle cx="8" cy="5" r="3.5" fill="#b8c4d0"/><path d="M2 14C2 10 14 10 14 14Z" fill="#b8c4d0"/>`)}
          ${ic(16, 16, svg`<path d="M5 2H11L15 5L13 8L11.5 7V14H4.5V7L3 8L1 5Z" fill="#1a78d2"/>`)}
          ${ic(16, 16, svg`<path d="M2 14L8 8C7 5 9 2 13 2L10.5 4.5L11.5 5.5L14 3C14.5 7 11 9 8.5 8.5" stroke="#1a78d2" stroke-width="2.4" fill="#1a78d2"/>`)}
        </div>
      </div>

      <div class="net">
        <div class="net-c">
          <svg width="24" height="20" viewBox="0 0 24 20" fill="none" stroke="#fff" stroke-width="2"><path d="M1 7C7 1 17 1 23 7M5 11C9 7 15 7 19 11M9 14.5C11 13 13 13 15 14.5" /><circle cx="12" cy="18" r="1.5" fill="#fff" stroke="none" /></svg>
        </div>
        <div class="net-rows">
          <div>
            <svg width="9" height="12" viewBox="0 0 9 12"><path d="M2 0V9M0 7L2 12L4 7Z" stroke="#26ca70" fill="#26ca70" /><path d="M7 12V3M5 5L7 0L9 5Z" stroke="#f58220" fill="#f58220" /></svg>
            <span>0.00K/s</span>
          </div>
          <div>
            <svg width="9" height="12" viewBox="0 0 9 12"><rect x="0.5" y="2.5" width="7" height="9" fill="#fff" stroke="#26ca70" /><rect x="1" y="6" width="6" height="5.5" fill="#26ca70" /><rect x="2" y="0" width="4" height="2" fill="#26ca70" /></svg>
            <span>0</span>
          </div>
        </div>
      </div>
    `;
  }
}
